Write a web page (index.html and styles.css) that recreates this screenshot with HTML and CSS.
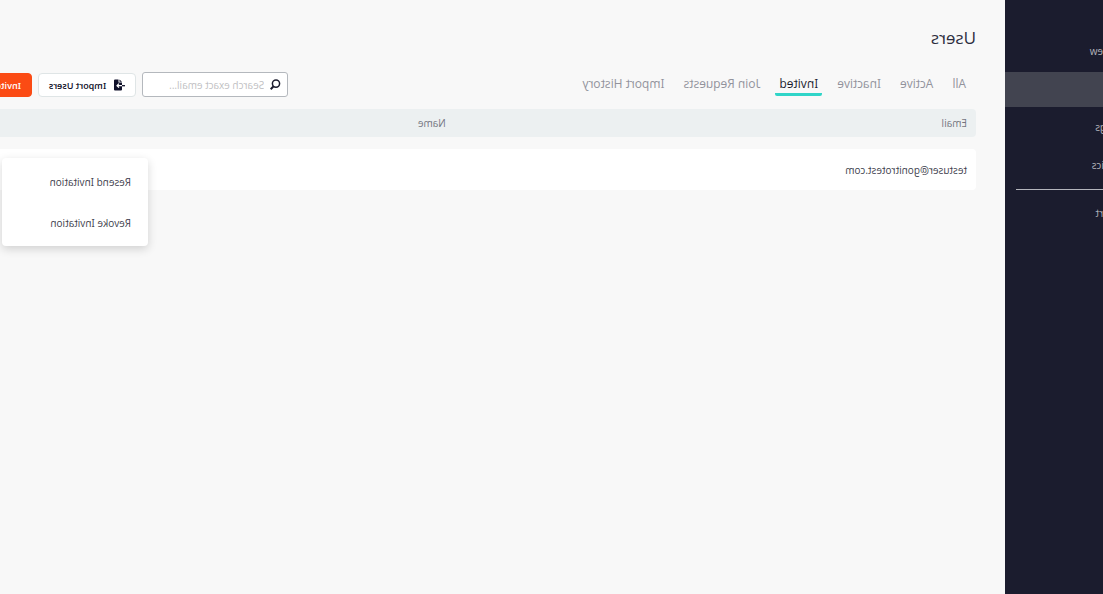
FILE: index.html
```html
<!DOCTYPE html>
<html lang="en">

<head>
    <meta charset="UTF-8">
    <meta name="viewport" content="width=device-width, initial-scale=1.0">
    <title>Users</title>
    <link rel="stylesheet" href="styles.css">
</head>

<body>
    <div class="mirror">
        <div class="shell">
            <nav class="sidebar">
                <ul>
                    <li><a href="#">Overview</a></li>
                    <li class="active"><a href="#">Users</a></li>
                    <li><a href="#">Settings</a></li>
                    <li><a href="#">Analytics</a></li>
                </ul>
                <hr>
                <ul>
                    <li><a href="#">Support</a></li>
                </ul>
            </nav>

            <main class="main">
                <h1>Users</h1>

                <div class="toolbar">
                    <div class="tabs">
                        <a href="#">All</a>
                        <a href="#">Active</a>
                        <a href="#">Inactive</a>
                        <a href="#" class="active">Invited</a>
                        <a href="#">Join Requests</a>
                        <a href="#">Import History</a>
                    </div>

                    <div class="actions">
                        <label class="search">
                            <svg width="11" height="11" viewBox="0 0 11 11" fill="none" stroke="#1b1c2e">
                                <circle cx="5" cy="4.6" r="3.6" stroke-width="1.5" />
                                <path d="M7.400 7.300l2.900 2.900" stroke-width="2" />
                            </svg>
                            <input type="text" placeholder="Search exact email..." aria-label="Search exact email">
                        </label>
                        <button class="btn">
                            <svg width="12" height="12" viewBox="0 0 12 12">
                                <path d="M6.500.5H10a1 1 0 0 1 1 1v9a1 1 0 0 1-1 1H4a1 1 0 0 1-1-1V3.500h3.500z" fill="#10112a" />
                                <path d="M3 2.700L5.500.5v2.200z" fill="#10112a" />
                                <path d="M0 6.700h3" stroke="#10112a" stroke-width="1.300" />
                                <path d="M3 6.700h5M6 4.700l2 2-2 2" fill="none" stroke="#fff" stroke-width="1.200" />
                            </svg>
                            Import Users
                        </button>
                        <button class="btn primary">Invite Users</button>
                    </div>
                </div>

                <table class="users">
                    <thead>
                        <tr>
                            <th class="email">Email</th>
                            <th>Name</th>
                        </tr>
                    </thead>
                    <tbody>
                        <tr>
                            <td>testuser@gonitrotest.com</td>
                            <td class="options">
                                <div class="menu">
                                    <button>Resend Invitation</button>
                                    <button>Revoke Invitation</button>
                                </div>
                            </td>
                        </tr>
                    </tbody>
                </table>
            </main>
        </div>
    </div>
</body>

</html>
```
FILE: styles.css
```css
* {
    box-sizing: border-box;
    margin: 0;
    padding: 0;
}

body,
button,
input {
    font-family: "Open Sans", "Noto Sans", sans-serif;
    font-feature-settings: "salt", "ss01", "ss02", "ss03";
    font-size: 10px;
    color: #3c3d4c;
}

body {
    background: #f8f8f8;
}

ul {
    list-style: none;
}

a {
    color: inherit;
    text-decoration: none;
}

/* whole page is flipped left to right */
.mirror {
    overflow: hidden;
    transform: scaleX(-1);
}

/* wider than the window on both sides */
.shell {
    display: flex;
    min-height: 100vh;
    margin: 0 -76px 0 -60px;
}

.sidebar {
    flex: none;
    width: 158px;
    padding-top: 34px;
    background: #1b1c2e;
    color: #b4b5bc;
}

.sidebar li {
    height: 35px;
    line-height: 35px;
    margin-bottom: 3px;
    padding-left: 30px;
}

.sidebar li.active {
    background: #424450;
}

.sidebar hr {
    height: 1px;
    margin: 6px 11px;
    border: none;
    background: #b4b5bc;
}

.main {
    flex: 1;
    padding: 24px 30px 0 29px;
}

h1 {
    font-size: 17px;
    font-weight: 400;
    line-height: 28px;
    color: #2c2d3e;
}

.toolbar {
    display: flex;
    justify-content: space-between;
    margin: 20px 0 12px;
}

.tabs {
    display: flex;
    gap: 11px;
    padding-left: 6px;
}

.tabs a {
    height: 24px;
    padding: 0 4px;
    font-size: 12px;
    line-height: 24px;
    color: #92939c;
}

.tabs a.active {
    color: #1b1c2e;
    font-weight: 500;
    border-bottom: 3px solid #30d5c8;
    border-radius: 2px;
}

.actions {
    display: flex;
    align-items: flex-end;
    gap: 6px;
    padding-right: 4px;
}

.search {
    display: flex;
    align-items: center;
    gap: 6px;
    width: 146px;
    height: 25px;
    padding: 0 6px;
    background: #fff;
    border: 1px solid #b4b8bd;
    border-radius: 3px;
}

.search svg {
    flex: none;
}

.search input {
    width: 100%;
    border: none;
    outline: none;
    background: none;
}

.search input::placeholder {
    color: #bfbfc3;
}

.btn {
    display: flex;
    align-items: center;
    gap: 7px;
    height: 24px;
    padding: 0 10px;
    background: #fff;
    border: 1px solid #dfe5e6;
    border-radius: 4px;
    font-size: 9px;
    font-weight: 600;
    color: #10112a;
    white-space: nowrap;
}

.btn.primary {
    background: #fb4b14;
    border-color: #fb4b14;
    color: #fff;
}

.users {
    width: 100%;
    border-collapse: separate;
    border-spacing: 0;
    text-align: left;
}

.users th {
    height: 28px;
    padding: 0 9px;
    background: #ecf0f1;
    font-weight: 400;
    color: #74757f;
}

.users .email {
    width: 51%;
}

/* space between the header and the rows */
.users tbody::before {
    content: "";
    display: block;
    height: 12px;
}

.users td {
    height: 41px;
    padding: 0 9px;
    background: #fff;
}

.users th:first-child,
.users td:first-child {
    border-radius: 4px 0 0 4px;
}

.users .options {
    position: relative;
}

.menu {
    position: absolute;
    top: 9px;
    right: 48px;
    width: 146px;
    padding: 3px 0;
    background: #fff;
    border-radius: 4px;
    box-shadow: 0 3px 10px rgba(0, 0, 0, .16);
}

.menu button {
    display: block;
    width: 100%;
    height: 41px;
    padding: 0 17px;
    border: none;
    background: none;
    text-align: left;
}
```
